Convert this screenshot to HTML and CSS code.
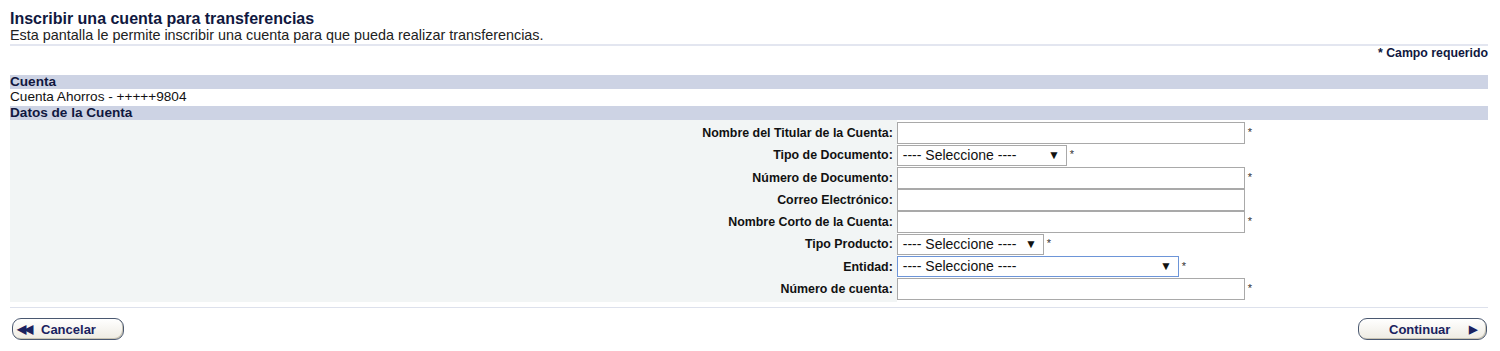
FILE: index.html
```html
<html>
    <head>
        <link rel="stylesheet" href="styles.css">
    </head>
    <body>
        <div class="page">
            <h1 class="title">Inscribir una cuenta para transferencias</h1>
            <p class="subtitle">Esta pantalla le permite inscribir una cuenta para que pueda realizar transferencias.</p>
            <div class="required-note">* Campo requerido</div>

            <div class="section-bar">Cuenta</div>
            <div class="section-row">Cuenta Ahorros - +++++9804</div>
            <div class="section-bar">Datos de la Cuenta</div>

            <div class="form">
                <label class="field-label">Nombre del Titular de la Cuenta:</label>
                <div class="field"><input type="text" class="input"><span class="star">*</span></div>

                <label class="field-label">Tipo de Documento:</label>
                <div class="field"><div class="select select-doc">---- Seleccione ----<span class="arrow">&#9660;</span></div><span class="star">*</span></div>

                <label class="field-label">N&uacute;mero de Documento:</label>
                <div class="field"><input type="text" class="input"><span class="star">*</span></div>

                <label class="field-label">Correo Electr&oacute;nico:</label>
                <div class="field"><input type="text" class="input"></div>

                <label class="field-label">Nombre Corto de la Cuenta:</label>
                <div class="field"><input type="text" class="input"><span class="star">*</span></div>

                <label class="field-label">Tipo Producto:</label>
                <div class="field"><div class="select select-prod">---- Seleccione ----<span class="arrow">&#9660;</span></div><span class="star">*</span></div>

                <label class="field-label">Entidad:</label>
                <div class="field"><div class="select select-ent focused">---- Seleccione ----<span class="arrow">&#9660;</span></div><span class="star">*</span></div>

                <label class="field-label">N&uacute;mero de cuenta:</label>
                <div class="field"><input type="text" class="input"><span class="star">*</span></div>
            </div>
            <div class="separator"></div>

            <div class="actions">
                <a href="#" class="btn btn-back"><span class="btn-icon">&#9664;&#9664;</span>Cancelar</a>
                <a href="#" class="btn btn-next">Continuar<span class="btn-icon">&#9654;</span></a>
            </div>
        </div>
    </body>
</html>
```

FILE: styles.css
```css
html, body {
    margin: 0;
    padding: 0;
    background: #fff;
    font-family: "Liberation Sans", Arial, sans-serif;
    color: #111;
}
.page {
    padding: 10px 12px 0 10px;
}
.title {
    margin: 0;
    font-size: 16px;
    font-weight: bold;
    color: #101840;
    line-height: 18px;
}
.subtitle {
    margin: 0;
    font-size: 14.4px;
    line-height: 15px;
    color: #222;
    padding-bottom: 1px;
    border-bottom: 2px solid #e3e6f0;
}
.required-note {
    text-align: right;
    font-size: 12.3px;
    font-weight: bold;
    color: #101840;
    line-height: 14px;
    height: 29px;
}
.section-bar {
    background: #cdd3e4;
    color: #101840;
    font-size: 13.6px;
    font-weight: bold;
    line-height: 14px;
    height: 14px;
}
.section-row {
    font-size: 13.6px;
    line-height: 14px;
    height: 14px;
    margin: 1px 0 2px 0;
    color: #111;
}
.form {
    background: linear-gradient(to right, #f2f5f5 60%, #fff 60%);
    display: grid;
    grid-template-columns: 60% 40%;
    grid-auto-rows: 22.25px;
    padding: 2px 0 2px 0;
}
.field-label {
    text-align: right;
    font-size: 12.4px;
    font-weight: bold;
    color: #111;
    padding-right: 4px;
    line-height: 22px;
}
.field {
    display: flex;
    align-items: center;
}
.input {
    width: 348px;
    height: 22px;
    border: 1px solid #a9a9a9;
    background: #fff;
    margin: 0;
    padding: 0;
    box-sizing: border-box;
}
.select {
    height: 21px;
    box-sizing: border-box;
    border: 1px solid #a9a9a9;
    background: #fff;
    font-size: 14px;
    line-height: 19px;
    padding-left: 5px;
    color: #111;
    position: relative;
}
.select .arrow {
    position: absolute;
    right: 6px;
    top: 0;
    font-size: 12px;
}
.select-doc {
    width: 170px;
}
.select-prod {
    width: 147px;
}
.select-ent {
    width: 282px;
}
.select.focused {
    border-color: #6d95d8;
}
.star {
    font-size: 11px;
    color: #333;
    margin: 3px 0 0 3px;
    align-self: flex-start;
    line-height: 14px;
}
.separator {
    margin-top: 5px;
    border-top: 1px solid #dde1ec;
}
.actions {
    display: flex;
    justify-content: space-between;
    padding: 10px 1px 0 2px;
}
.btn {
    display: inline-flex;
    align-items: center;
    height: 22px;
    border: 1px solid #4a5870;
    border-radius: 9px;
    background: linear-gradient(#ffffff, #eeebe2);
    box-shadow: inset -1px -1px 0 #c9c4b4;
    color: #1a2260;
    font-size: 13px;
    font-weight: bold;
    text-decoration: none;
    box-sizing: border-box;
}
.btn-back {
    width: 112px;
    padding-left: 4px;
}
.btn-back .btn-icon {
    font-size: 12px;
    letter-spacing: -2px;
    margin-right: 10px;
}
.btn-next {
    width: 129px;
    padding-left: 30px;
}
.btn-next .btn-icon {
    font-size: 11px;
    margin-left: auto;
    margin-right: 9px;
}
```
